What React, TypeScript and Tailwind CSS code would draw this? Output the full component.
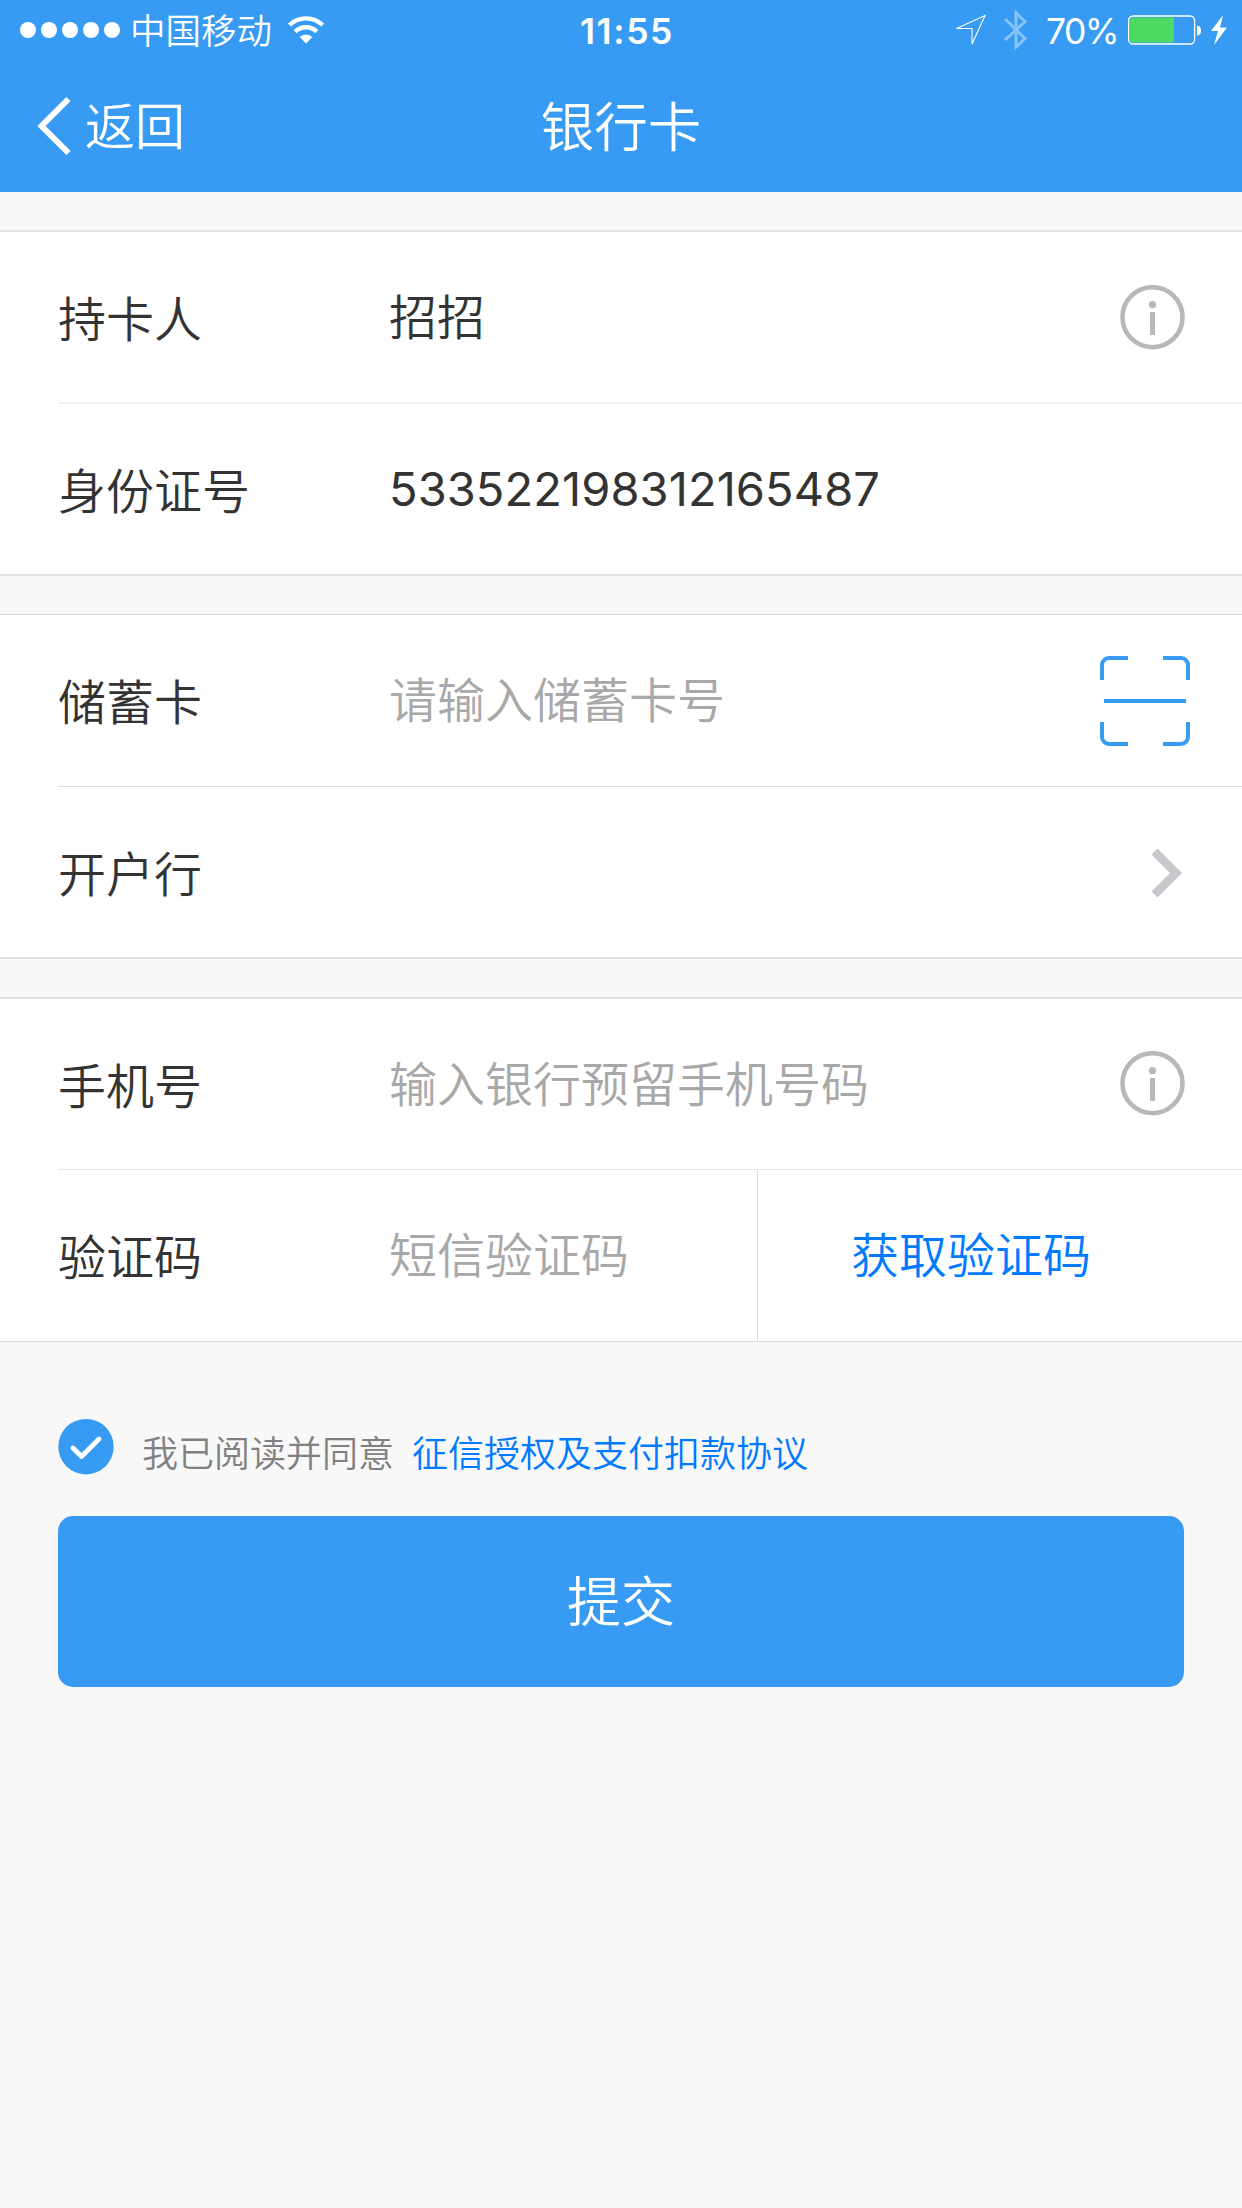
import { useState, type ReactNode } from 'react';
import clsx from 'clsx';

function InfoIcon() {
  return (
    <svg width="65" height="65" viewBox="0 0 65 65" fill="none">
      <circle cx="32.5" cy="32.2" r="30" stroke="#b8b8b8" strokeWidth="4.6" />
      <circle cx="32.5" cy="19.7" r="3.6" fill="#b8b8b8" />
      <rect x="30" y="27" width="5" height="23" fill="#b8b8b8" />
    </svg>
  );
}

function ScanIcon() {
  return (
    <svg width="90" height="90" viewBox="0 0 90 90" fill="none" stroke="#379bf3" strokeWidth="4">
      <path d="M2 24V9a7 7 0 0 1 7-7H28M63 2H81a7 7 0 0 1 7 7V24M88 66V81a7 7 0 0 1-7 7H63M28 88H9a7 7 0 0 1-7-7V66" />
      <path d="M4 45H86" />
    </svg>
  );
}

function StatusBar() {
  return (
    <div className="grid h-[60px] grid-cols-[1fr_auto_1fr] items-center">
      <div className="flex items-center pl-5">
        <div className="flex gap-[5px]">
          {[0, 1, 2, 3, 4].map((i) => (
            <span key={i} className="size-4 rounded-full bg-white" />
          ))}
        </div>
        <span className="ml-[10px] pt-[3px] text-[35.5px] leading-[57px]">中国移动</span>
        <svg className="ml-[15px]" width="38" height="28" viewBox="0 0 38 28" fill="none" stroke="#fff" strokeWidth="4.4">
          <path d="M2.4 9A24 24 0 0 1 35.6 9" />
          <path d="M8.2 15.6A15.5 15.5 0 0 1 29.8 15.6" />
          <path d="M19 27.5L12.7 21A9 9 0 0 1 25.3 21Z" fill="#fff" stroke="none" />
        </svg>
      </div>
      <span className="pt-[3px] pl-[12px] text-[35.5px] leading-[57px] font-semibold tracking-[1.6px]">11:55</span>
      <div className="flex items-center justify-end pr-[14px]">
        <svg width="32" height="32" viewBox="0 0 32 32" fill="none" stroke="#fff" strokeWidth="1.1">
          <path d="M1.5 14.5L30 1.5L17 30V14.5Z" />
        </svg>
        <svg className="ml-[17px]" width="24" height="42" viewBox="0 0 24 42" fill="none" stroke="#fff" strokeOpacity="0.4" strokeWidth="3">
          <path d="M1 10L21 29.5L12 38V4L21 12.5L1 31" />
        </svg>
        <span className="ml-[18px] pt-[3px] text-[35.5px] leading-[57px] font-normal tracking-[-1.6px]">70%</span>
        <svg className="ml-[10px]" width="100" height="30" viewBox="0 0 100 30">
          <rect x="0.6" y="1" width="66" height="28" rx="4.5" fill="none" stroke="#fff" strokeWidth="1.3" />
          <path d="M5 2.5H46V27.5H5A3 3 0 0 1 2 24.5V5.500A3 3 0 0 1 5 2.500Z" fill="#4cd964" />
          <path d="M69 10.500Q73 11 73 15.500T69 20.500Z" fill="#fff" />
          <path d="M95 0L83 16H90L86 30L99 12.500H92Z" fill="#fff" />
        </svg>
      </div>
    </div>
  );
}

function NavBar() {
  return (
    <div className="grid h-[132px] grid-cols-3 items-center">
      <button className="flex items-center pl-[37px] text-[50px] leading-[129px]">
        <svg width="34" height="60" viewBox="0 0 34 60" fill="none" stroke="#fff" strokeWidth="6">
          <path d="M31.500 3L4.500 30L31.500 57" />
        </svg>
        <span className="ml-[14px] pt-[3px]">返回</span>
      </button>
      <h1 className="pt-[3px] text-center text-[53.5px] leading-[129px]">银行卡</h1>
    </div>
  );
}

function Row({ label, className, children }: { label: string; className: string; children?: ReactNode }) {
  return (
    <div className={clsx('flex shrink-0 items-center', className)}>
      <span className="w-[332px] shrink-0 pt-[5px]">{label}</span>
      {children}
    </div>
  );
}

export default function App() {
  const [agreed, setAgreed] = useState(true);

  return (
    <div className="flex min-h-[2208px] w-[1242px] flex-col bg-[#f8f8f8] font-['Inter','Noto_Sans_CJK_SC',sans-serif] text-[48px] leading-[72px] font-[350] text-[#333]">
      <header className="h-[192px] bg-[#379bf3] text-white">
        <StatusBar />
        <NavBar />
      </header>

      <section className="mt-[38px] flex h-[346px] flex-col border-y-2 border-[#e2e2e2] bg-white pl-[58px]">
        <Row label="持卡人" className="h-[170px]">
          <span className="-ml-px flex-1 pt-px">招招</span>
          <span className="mr-[57px]"><InfoIcon /></span>
        </Row>
        <div className="h-[2px] bg-[#f1f1f1]" />
        <Row label="身份证号" className="h-[170px]">
          <span className="-ml-px text-[47px] font-normal tracking-[0.08px]">533522198312165487</span>
        </Row>
      </section>

      <section className="mt-[38px] flex h-[345px] flex-col border-t border-b-2 border-t-[#dcdcdc] border-b-[#e2e2e2] bg-white pl-[58px]">
        <Row label="储蓄卡" className="h-[171px]">
          <span className="-ml-px flex-1 pt-px text-[#a8a8a8]">请输入储蓄卡号</span>
          <span className="mr-[52px] pt-px"><ScanIcon /></span>
        </Row>
        <div className="h-px bg-[#dcdcdc]" />
        <Row label="开户行" className="h-[170px]">
          <svg className="mt-[2px] mr-[60px] ml-auto" width="31" height="50" viewBox="0 0 31 50" fill="none" stroke="#c8c7cc" strokeWidth="8.500">
            <path d="M3.500 3.500L25 25L3.500 46.500" />
          </svg>
        </Row>
      </section>

      <section className="mt-[38px] flex h-[345px] flex-col border-t-2 border-b border-t-[#e2e2e2] border-b-[#dcdcdc] bg-white pl-[58px]">
        <Row label="手机号" className="h-[170px]">
          <span className="-ml-px flex-1 pt-px text-[#a8a8a8]">输入银行预留手机号码</span>
          <span className="mr-[57px] pb-[2px]"><InfoIcon /></span>
        </Row>
        <div className="h-px bg-[#e6e6e6]" />
        <Row label="验证码" className="h-[171px]">
          <span className="-ml-px flex-1 pt-px text-[#a8a8a8]">短信验证码</span>
          <button className="h-full w-[485px] border-l border-[#dcdcdc] pt-px pr-[58px] text-[#007aff]">获取验证码</button>
        </Row>
      </section>

      <div className="mt-[75px] flex h-[60px] items-center px-[58px] text-[36px] leading-[54px] text-[#808080]">
        <button onClick={() => setAgreed(!agreed)}>
          <svg width="56" height="56" viewBox="0 0 56 56" fill="none">
            <circle cx="28" cy="27.700" r="27.700" fill={agreed ? '#379bf3' : '#c8c7cc'} />
            <path d="M15 29L23.500 37.500L41 20" stroke="#fff" strokeWidth="4.800" strokeLinecap="round" strokeLinejoin="round" />
          </svg>
        </button>
        <span className="ml-[28px] pt-[13px]">我已阅读并同意</span>
        <a className="ml-[18px] pt-[13px] text-[#007aff]">征信授权及支付扣款协议</a>
      </div>

      <button className="mx-[58px] mt-[39px] h-[171px] rounded-[15px] bg-[#379bf3] pt-[3px] text-[54px] text-white">提交</button>
    </div>
  );
}
